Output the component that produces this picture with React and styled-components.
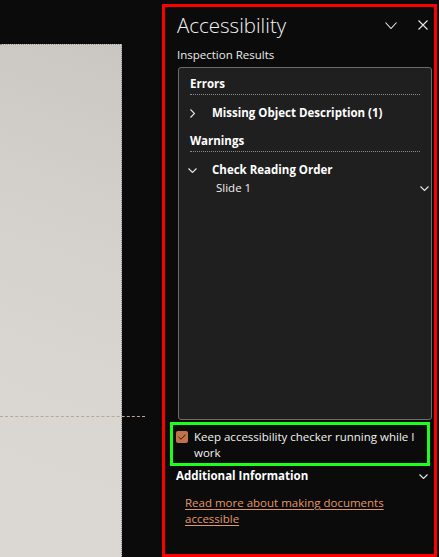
import React from 'react'
import { styled, createGlobalStyle } from 'styled-components'

// -----------------------------------------------

const GlobalStyle = createGlobalStyle`
  html, body {
    margin: 0;
    padding: 0;
    background: #0b0b0b;
    font-family: "Segoe UI", "Open Sans", "Noto Sans", sans-serif;
    color: #fff;
  }
`;

const Screen = styled.div`
  display: flex;
  width: 439px;
  height: 557px;
  overflow: hidden;
`;

const Canvas = styled.div`
  position: relative;
  width: 162px;
  flex-shrink: 0;
`;

const Slide = styled.div`
  margin-top: 44px;
  width: 122px;
  height: 513px;
  box-sizing: border-box;
  border-top: 1px dotted #8c8c8c;
  border-right: 1px dotted #8c8c8c;
  background: linear-gradient(200deg, #cac7c2 0%, #d4d1cc 35%, #dad7d2 70%, #dbd8d3 100%);
`;

const Guide = styled.div`
  position: absolute;
  left: 0;
  top: 416px;
  width: 145px;
  border-top: 1px dashed #b9a897;
`;

const Panel = styled.div`
  margin-top: 4px;
  width: 275px;
  height: 553px;
  box-sizing: border-box;
  border: 3px solid #ff0000;
  display: flex;
  flex-direction: column;
`;

const Header = styled.div`
  display: flex;
  align-items: center;
  padding: 3px 0 0 12px;
  height: 30px;
`;

const Title = styled.div`
  flex: 1;
  font-size: 20.5px;
  font-weight: 300;
  line-height: 30px;
  color: #f4f4f4;
`;

const IconButton = styled.div`
  width: ${p => p.$w}px;
  display: flex;
  justify-content: center;
  align-items: center;
  margin-right: ${p => p.$mr || 0}px;
`;

const Caption = styled.div`
  margin: 7px 0 0 12px;
  font-size: 11.5px;
  line-height: 16px;
  color: #ececec;
`;

const Results = styled.div`
  margin: 4px 0 0 13px;
  width: 254px;
  height: 353px;
  box-sizing: border-box;
  border: 1px solid #6c6c6c;
  border-radius: 3px;
  background: #1f1f1f;
  padding: 8px 11px 0 11px;
`;

const Section = styled.div`
  font-size: 11.5px;
  font-weight: 700;
  line-height: 16px;
  padding-bottom: 2px;
  border-bottom: 1px dotted #8a8a8a;
  margin-top: ${p => p.$mt || 0}px;
`;

const Row = styled.div`
  display: flex;
  align-items: center;
  height: 16px;
  margin-top: ${p => p.$mt || 0}px;
  font-size: 11.5px;
  font-weight: 700;
  line-height: 16px;
`;

const Twisty = styled.div`
  width: 12px;
  margin-left: -4px;
  margin-right: 14px;
  display: flex;
  justify-content: center;
`;

const SubRow = styled.div`
  display: flex;
  align-items: center;
  justify-content: space-between;
  height: 16px;
  margin: 2px -9px 0 0;
  padding-left: 26px;
  font-size: 11.5px;
  line-height: 16px;
  color: #f0f0f0;
`;

const CheckRow = styled.label`
  display: flex;
  align-items: flex-start;
  gap: 6px;
  margin: 2px 0 0 5px;
  width: 260px;
  height: 44px;
  box-sizing: border-box;
  border: 3px solid #1cff1c;
  padding: 4px 0 0 3px;
  font-size: 11.5px;
  line-height: 16px;
  color: #f2f2f2;
`;

const Box = styled.span`
  width: 12px;
  height: 12px;
  margin-top: 2px;
  flex-shrink: 0;
  border-radius: 2px;
  background: #c0724b;
  display: flex;
  align-items: center;
  justify-content: center;
`;

const InfoHeader = styled.div`
  display: flex;
  align-items: center;
  justify-content: space-between;
  margin-top: 2px;
  padding: 0 6px 0 11px;
  height: 16px;
  font-size: 11.5px;
  font-weight: 700;
  line-height: 16px;
`;

const Link = styled.a`
  display: block;
  margin: 11px 0 0 20px;
  width: 210px;
  font-size: 11.5px;
  line-height: 16px;
  color: #e0976c;
  text-decoration: underline;
  text-underline-offset: 2px;
`;

// -----------------------------------------------

const ChevronDown = ({ w = 11, h = 6, color = '#e8e8e8' }) => (
  <svg width={w} height={h} viewBox={`0 0 ${w} ${h}`}>
    <polyline points={`0.5,0.5 ${w / 2},${h - 0.5} ${w - 0.5},0.5`} fill="none" stroke={color} strokeWidth="1.1" />
  </svg>
);

const ChevronRight = () => (
  <svg width="5" height="9" viewBox="0 0 5 9">
    <polyline points="0.5,0.5 4.5,4.5 0.5,8.5" fill="none" stroke="#e8e8e8" strokeWidth="1.1" />
  </svg>
);

const Close = () => (
  <svg width="10" height="10" viewBox="0 0 10 10">
    <path d="M0.5 0.5 L9.5 9.5 M9.5 0.5 L0.5 9.5" stroke="#e8e8e8" strokeWidth="1.1" />
  </svg>
);

const Check = () => (
  <svg width="8" height="6" viewBox="0 0 8 6">
    <polyline points="0.5,3 3,5.3 7.5,0.6" fill="none" stroke="#2a1a12" strokeWidth="1" />
  </svg>
);

// -----------------------------------------------

const App = () => {
  return (
    <>
      <GlobalStyle />
      <Screen>
        <Canvas>
          <Slide />
          <Guide />
        </Canvas>
        <Panel>
          <Header>
            <Title>Accessibility</Title>
            <IconButton $w={22} $mr={14}><ChevronDown w={12} h={7} /></IconButton>
            <IconButton $w={14} $mr={4}><Close /></IconButton>
          </Header>
          <Caption>Inspection Results</Caption>
          <Results>
            <Section>Errors</Section>
            <Row $mt={10}>
              <Twisty><ChevronRight /></Twisty>
              Missing Object Description (1)
            </Row>
            <Section $mt={12}>Warnings</Section>
            <Row $mt={10}>
              <Twisty><ChevronDown w={9} h={5} /></Twisty>
              Check Reading Order
            </Row>
            <SubRow>
              Slide 1
              <ChevronDown w={9} h={5} />
            </SubRow>
          </Results>
          <CheckRow>
            <Box><Check /></Box>
            <span>Keep accessibility checker running while I<br />work</span>
          </CheckRow>
          <InfoHeader>
            Additional Information
            <ChevronDown w={9} h={5} />
          </InfoHeader>
          <Link>Read more about making documents accessible</Link>
        </Panel>
      </Screen>
    </>
  )
}

export default App
